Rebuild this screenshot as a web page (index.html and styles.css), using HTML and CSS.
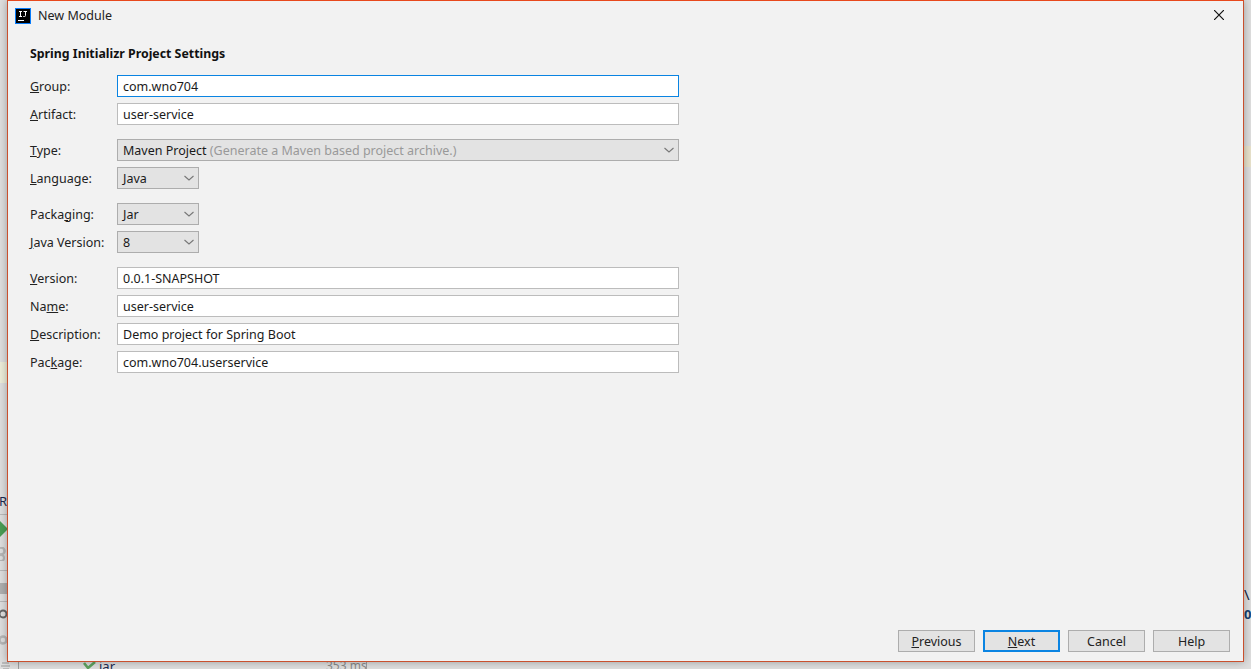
FILE: index.html
```html
<!DOCTYPE html>
<html lang="en">
<head>
<meta charset="utf-8">
<title>New Module</title>
<link rel="stylesheet" href="styles.css">
</head>
<body>
<div class="desktop">
  <div class="ide-line ide-line-a"></div>
  <div class="ide-line ide-line-b"></div>
  <div class="ide-line ide-line-c"></div>
  <div class="ide-tint ide-tint-left"></div>
  <div class="ide-tint ide-tint-right"></div>
  <div class="ide-block"></div>
  <span class="ide-text ide-run">Ru</span>
  <svg class="ide-icon ide-play" width="7" height="16" viewBox="0 0 7 16"><path d="M0 0L8 8L0 16Z" fill="#499c54"/></svg>
  <svg class="ide-icon ide-gear-a" width="7" height="14" viewBox="0 0 7 14"><circle cx="1" cy="4" r="3.5" fill="none" stroke="#b5b5b5" stroke-width="2.5"/><circle cx="1" cy="11" r="3" fill="none" stroke="#b5b5b5" stroke-width="2"/></svg>
  <svg class="ide-icon ide-ring-a" width="7" height="12" viewBox="0 0 7 12"><circle cx="3" cy="6" r="3.5" fill="none" stroke="#666" stroke-width="2"/></svg>
  <svg class="ide-icon ide-ring-b" width="7" height="12" viewBox="0 0 7 12"><circle cx="3" cy="6" r="3.5" fill="none" stroke="#b5b5b5" stroke-width="2.5"/></svg>
  <svg class="ide-icon ide-gear-b" width="12" height="7" viewBox="0 0 12 7"><path d="M2 1h7M1 4h9M3 7h6" stroke="#bcbcbc" stroke-width="2"/></svg>
  <div class="ide-sep ide-sep-a"></div>
  <svg class="ide-icon ide-check" width="13" height="7" viewBox="0 0 13 7"><path d="M1 1L5 6L12 0" fill="none" stroke="#5fa35f" stroke-width="2.6"/></svg>
  <span class="ide-text ide-jar">jar</span>
  <span class="ide-text ide-ms">353 ms</span>
  <div class="ide-sep ide-sep-b"></div>
  <span class="ide-text ide-slash">\</span>
  <span class="ide-text ide-zero">0</span>

  <section class="dialog">
    <header class="titlebar">
      <svg class="app-icon" width="16" height="16" viewBox="0 0 16 16">
        <rect width="16" height="16" fill="#087cfa"/>
        <rect x="1" y="1" width="14" height="14" fill="#000"/>
        <path d="M4 3.500h3M5.500 3.500v5M4 8.500h3M8.500 3.500h3.500M10.500 3.500v4q0 1-1 1h-1.200" fill="none" stroke="#fff" stroke-width="1"/>
        <rect x="3" y="12" width="6" height="1" fill="#fff"/>
      </svg>
      <span class="title">New Module</span>
      <svg class="close" width="10" height="10" viewBox="0 0 10 10"><path d="M0 0L10 10M10 0L0 10" stroke="#111" stroke-width="1.200"/></svg>
    </header>
    <main class="content">
      <h1 class="heading">Spring Initializr Project Settings</h1>
      <div class="form">
        <div class="group">
          <div class="row"><label class="label"><u>G</u>roup:</label><div class="field focused">com.wno704</div></div>
          <div class="row"><label class="label"><u>A</u>rtifact:</label><div class="field">user-service</div></div>
        </div>
        <div class="group">
          <div class="row"><label class="label"><u>T</u>ype:</label><div class="combo wide"><span class="value">Maven Project <span class="hint">(Generate a Maven based project archive.)</span></span><svg class="chevron" width="10" height="6" viewBox="0 0 10 6"><path d="M0.500 1L5 5L9.500 1" fill="none" stroke="#777" stroke-width="1.100"/></svg></div></div>
          <div class="row"><label class="label"><u>L</u>anguage:</label><div class="combo"><span class="value">Java</span><svg class="chevron" width="10" height="6" viewBox="0 0 10 6"><path d="M0.500 1L5 5L9.500 1" fill="none" stroke="#777" stroke-width="1.100"/></svg></div></div>
        </div>
        <div class="group">
          <div class="row"><label class="label">Packa<u>g</u>ing:</label><div class="combo"><span class="value">Jar</span><svg class="chevron" width="10" height="6" viewBox="0 0 10 6"><path d="M0.500 1L5 5L9.500 1" fill="none" stroke="#777" stroke-width="1.100"/></svg></div></div>
          <div class="row"><label class="label"><u>J</u>ava Version:</label><div class="combo"><span class="value">8</span><svg class="chevron" width="10" height="6" viewBox="0 0 10 6"><path d="M0.500 1L5 5L9.500 1" fill="none" stroke="#777" stroke-width="1.100"/></svg></div></div>
        </div>
        <div class="group">
          <div class="row"><label class="label"><u>V</u>ersion:</label><div class="field">0.0.1-SNAPSHOT</div></div>
          <div class="row"><label class="label">Na<u>m</u>e:</label><div class="field">user-service</div></div>
          <div class="row"><label class="label"><u>D</u>escription:</label><div class="field">Demo project for Spring Boot</div></div>
          <div class="row"><label class="label">Pac<u>k</u>age:</label><div class="field">com.wno704.userservice</div></div>
        </div>
      </div>
    </main>
    <footer class="buttons">
      <button class="btn"><u>P</u>revious</button>
      <button class="btn primary"><u>N</u>ext</button>
      <button class="btn">Cancel</button>
      <button class="btn">Help</button>
    </footer>
  </section>
</div>
</body>
</html>
```

FILE: styles.css
```css
* { box-sizing: border-box; }
html, body { margin: 0; padding: 0; }
body { font-family: "Noto Sans", "Open Sans", sans-serif; font-size: 12.5px; color: #1a1a1a; overflow: hidden; }
.desktop { position: relative; width: 1251px; height: 669px; background: #dedede; overflow: hidden; }

.ide-line, .ide-tint, .ide-block, .ide-text, .ide-icon, .ide-sep { position: absolute; }
.ide-line { left: 0; width: 7px; height: 1px; background: #b9b9b9; }
.ide-line-a { top: 514px; }
.ide-line-b { top: 570px; }
.ide-line-c { top: 601px; }
.ide-tint { background: #e8e2cb; }
.ide-tint-left { left: 0; top: 362px; width: 7px; height: 21px; background: #ececd8; }
.ide-tint-right { left: 1244px; top: 146px; width: 7px; height: 21px; }
.ide-block { left: 0; top: 583px; width: 7px; height: 11px; background: #aeaeae; }
.ide-text { font-size: 13px; line-height: 16px; color: #1c2a50; }
.ide-run { left: -1px; top: 493px; }
.ide-play { left: 0; top: 521px; }
.ide-gear-a { left: 0; top: 547px; }
.ide-ring-a { left: 0; top: 608px; }
.ide-ring-b { left: 0; top: 634px; }
.ide-gear-b { left: 0; top: 662px; }
.ide-sep { top: 662px; width: 1px; height: 7px; background: #9d9d9d; }
.ide-sep-a { left: 18px; }
.ide-check { left: 83px; top: 662px; }
.ide-jar { left: 99px; top: 658px; }
.ide-ms { left: 326px; top: 658px; font-size: 12px; color: #8a8a8a; }
.ide-sep-b { left: 366px; }
.ide-slash { left: 1244px; top: 586px; color: #15233f; font-size: 15px; }
.ide-zero { left: 1244px; top: 606px; color: #15406f; font-weight: 700; }

.dialog { position: absolute; left: 7px; top: 0; width: 1237px; height: 662px; display: flex; flex-direction: column; background: #f2f2f2; border: 1px solid #c9502e; border-top: 1px solid #e8491d; box-shadow: 0 0 8px rgba(0,0,0,.3); }
.titlebar { display: flex; align-items: center; height: 29px; padding: 0 19px 0 7px; flex: none; }
.app-icon { flex: none; margin-top: 1px; }
.title { margin-left: 7px; flex: 1; color: #222; line-height: 28px; }
.close { flex: none; margin-top: -1px; }

.content { flex: 1; padding: 0 22px; }
.heading { margin: 15px 0 12px; font-size: 12.35px; line-height: 18px; font-weight: 700; color: #111; }
.form { width: 649px; display: flex; flex-direction: column; gap: 14px; }
.group { display: flex; flex-direction: column; gap: 6px; }
.row { display: flex; align-items: center; height: 22px; }
.label { width: 87px; flex: none; color: #222; line-height: 20px; margin-top: 1px; }
.field, .combo { height: 22px; border: 1px solid #bcbcbc; padding: 0 5px; line-height: 20px; color: #1a1a1a; }
.field { flex: 1; background: #fff; padding-top: 1px; }
.field.focused { border-color: #0a84e2; }
.combo { width: 82px; display: flex; justify-content: space-between; align-items: center; background: #e3e3e3; border-color: #adadad; padding-right: 4px; }
.combo.wide { flex: 1; }
.value { margin-top: 2px; }
.hint { color: #999; }
.chevron { flex: none; }

.buttons { flex: none; display: flex; justify-content: flex-end; gap: 8px; padding: 0 13px 9px 0; }
.btn { width: 77px; height: 22px; padding: 1px 0 0; font: inherit; line-height: 19px; background: #e3e3e3; border: 1px solid #adadad; color: #222; }
.btn.primary { border: 2px solid #0a84e2; line-height: 17px; }
```
